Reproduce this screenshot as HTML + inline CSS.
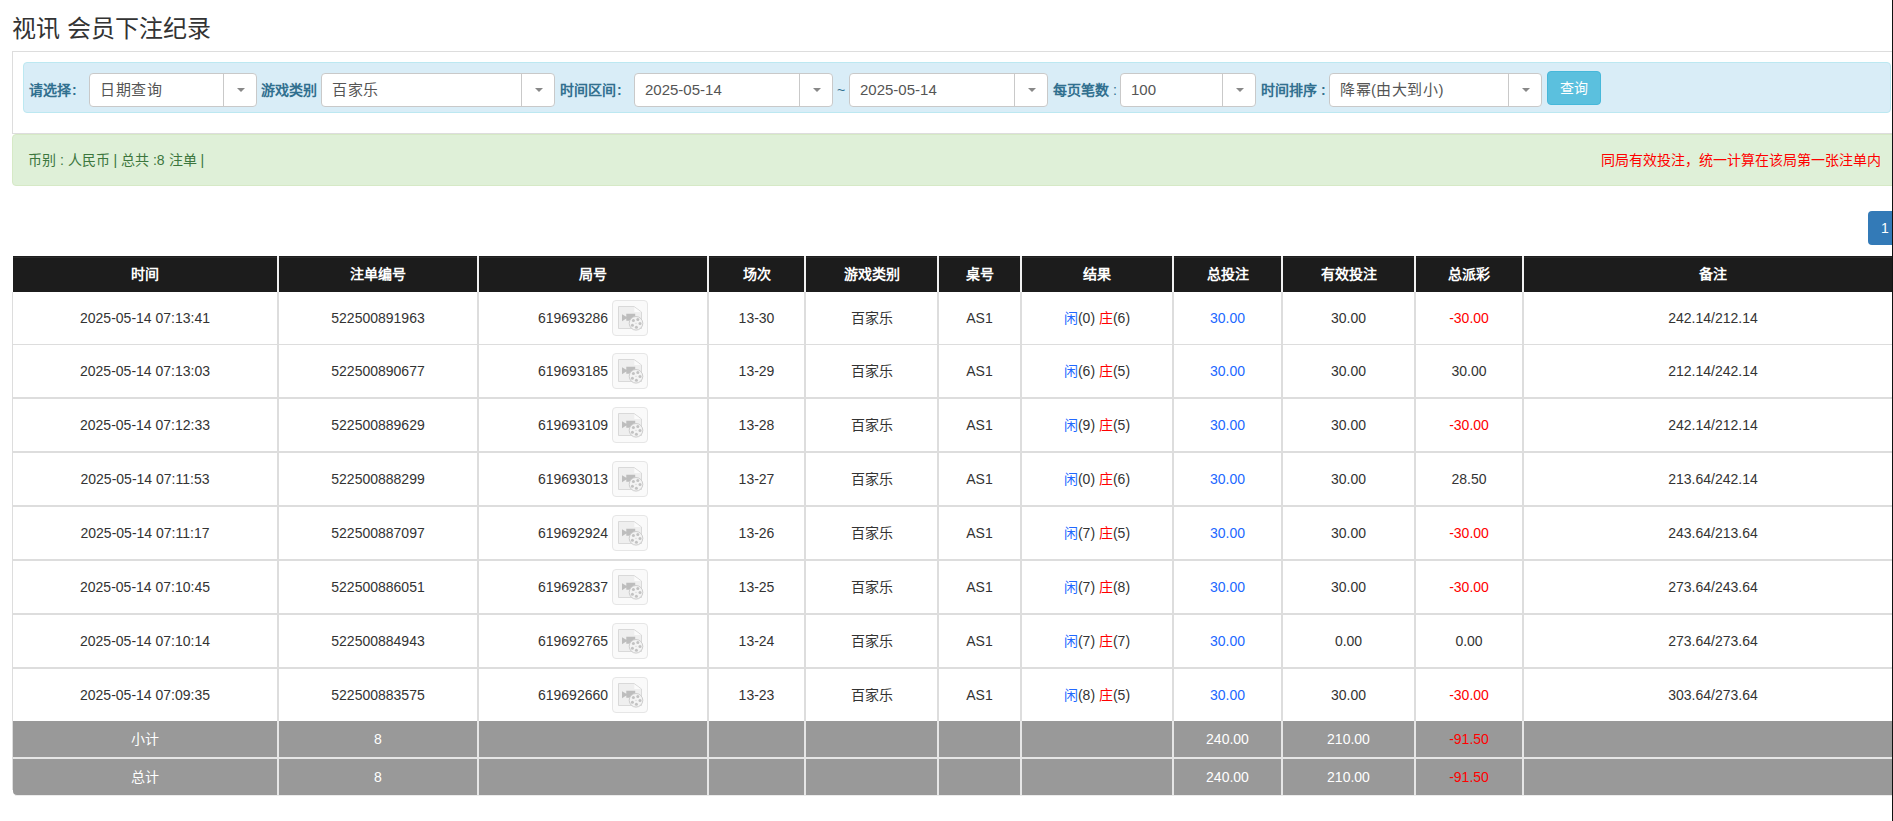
<!DOCTYPE html><html lang="zh-CN"><head><meta charset="utf-8"><title>视讯 会员下注纪录</title><style>
*{box-sizing:border-box;margin:0;padding:0}
html,body{width:1893px;height:821px;overflow:hidden;background:#fff}
body{position:relative;font-family:"Liberation Sans",sans-serif;font-size:14px;color:#333}
.abs{position:absolute}
.title{left:12px;top:12px;font-size:24px;line-height:34px;color:#333;white-space:nowrap}
.panel{left:12px;top:51px;width:1900px;height:83px;border:1px solid #ddd;border-right:none;background:#fff}
.bar{left:23px;top:62px;width:1868px;height:51px;border:1px solid #bce8f1;border-radius:4px;background:#d9edf7}
.lbl{color:#31708f;font-weight:bold;white-space:nowrap;line-height:20px;top:80px}
.sel{top:73px;height:34px;border:1px solid #c9c9c9;border-radius:4px;background:#fff}
.sel .t{position:absolute;left:10px;top:0;line-height:32px;color:#555;white-space:nowrap;font-size:15px}
.sel .d{position:absolute;top:0;bottom:0;border-left:1px solid #c9c9c9}
.sel .ar{position:absolute;top:14px;width:0;height:0;border-left:4px solid transparent;border-right:4px solid transparent;border-top:4px solid #888}
.btn{left:1547px;top:71px;width:54px;height:34px;border:1px solid #46b8da;border-radius:4px;background:#5bc0de;color:#fff;text-align:center;line-height:32px}
.alert{left:12px;top:134px;width:1900px;height:52px;border:1px solid #d6e9c6;border-radius:4px;background:#dff0d8}
.gtxt{left:28px;top:150px;line-height:20px;color:#3c763d;white-space:nowrap}
.rtxt{left:1601px;top:150px;line-height:20px;color:#f00;white-space:nowrap}
.pg{left:1868px;top:211px;width:40px;height:34px;background:#337ab7;border-radius:4px 0 0 4px;color:#fff;line-height:34px;padding-left:13px}
.vl{width:2px}
.hl{height:2px}
.c{position:absolute;text-align:center;white-space:nowrap}
.th{color:#fff;font-weight:bold;line-height:36px;top:256px;height:36px}
.p{margin:0 1px}
.blue{color:#2268ff}
.red{color:#f00}
.ico{display:inline-block;vertical-align:middle;width:36px;height:36px;border:1px solid #e6e6e6;border-radius:4px;background:#fafafa;margin-left:4px;position:relative;top:-1px}
.ico svg{position:absolute;left:-1px;top:-1px}
.edge{left:1892px;top:0;width:1px;height:821px;background:#111}
</style></head><body>
<div class="abs title">视讯 会员下注纪录</div>
<div class="abs panel"></div>
<div class="abs bar"></div>
<div class="abs lbl" style="left:29px">请选择<span style="margin-left:1px">:</span></div>
<div class="abs sel" style="left:89px;width:168px"><span class="t"><span style="letter-spacing:.5px">日期查询</span></span><span class="d" style="left:133px"></span><span class="ar" style="left:147px"></span></div>
<div class="abs lbl" style="left:261px">游戏类别</div>
<div class="abs sel" style="left:321px;width:234px"><span class="t"><span style="letter-spacing:.5px">百家乐</span></span><span class="d" style="left:199px"></span><span class="ar" style="left:213px"></span></div>
<div class="abs lbl" style="left:560px">时间区间<span style="margin-left:1px">:</span></div>
<div class="abs sel" style="left:634px;width:199px"><span class="t">2025-05-14</span><span class="d" style="left:164px"></span><span class="ar" style="left:178px"></span></div>
<div class="abs" style="left:837px;top:80px;line-height:20px;color:#31708f">~</div>
<div class="abs sel" style="left:849px;width:199px"><span class="t">2025-05-14</span><span class="d" style="left:164px"></span><span class="ar" style="left:178px"></span></div>
<div class="abs lbl" style="left:1053px">每页笔数 <span style="font-weight:normal">:</span></div>
<div class="abs sel" style="left:1120px;width:136px"><span class="t">100</span><span class="d" style="left:101px"></span><span class="ar" style="left:115px"></span></div>
<div class="abs lbl" style="left:1261px">时间排序 :</div>
<div class="abs sel" style="left:1329px;width:213px"><span class="t"><span style="letter-spacing:.5px">降幂(由大到小)</span></span><span class="d" style="left:178px"></span><span class="ar" style="left:192px"></span></div>
<div class="abs btn">查询</div>
<div class="abs alert"></div>
<div class="abs gtxt">币别 : 人民币 | 总共 :8 注单 |</div>
<div class="abs rtxt">同局有效投注，统一计算在该局第一张注单内</div>
<div class="abs pg">1</div>
<div class="abs" style="left:13px;top:256px;width:1880px;height:36px;background:linear-gradient(#1e1e1e 0,#1e1e1e 1px,#2a2a2a 1px,#2a2a2a 2px,#1c1c1c 2px)"></div>
<div class="abs" style="left:12px;top:344px;width:1881px;height:1px;background:#ddd"></div>
<div class="abs hl" style="left:12px;top:397px;width:1881px;background:#ddd"></div>
<div class="abs hl" style="left:12px;top:451px;width:1881px;background:#ddd"></div>
<div class="abs hl" style="left:12px;top:505px;width:1881px;background:#ddd"></div>
<div class="abs hl" style="left:12px;top:559px;width:1881px;background:#ddd"></div>
<div class="abs hl" style="left:12px;top:613px;width:1881px;background:#ddd"></div>
<div class="abs hl" style="left:12px;top:667px;width:1881px;background:#ddd"></div>
<div class="abs" style="left:13px;top:721px;width:1880px;height:36px;background:#999"></div>
<div class="abs" style="left:12px;top:757px;width:1881px;height:2px;background:#e6e6e6"></div>
<div class="abs" style="left:13px;top:759px;width:1880px;height:36px;background:#999;border-bottom-left-radius:4px"></div>
<div class="abs" style="left:12px;top:292px;width:1px;height:498px;background:#ddd"></div>
<div class="abs" style="left:15px;top:795px;width:1878px;height:1px;background:#ececec"></div>
<div class="abs vl" style="left:277px;top:256px;height:36px;background:#f0f0f0"></div>
<div class="abs vl" style="left:277px;top:292px;height:429px;background:#ddd"></div>
<div class="abs vl" style="left:277px;top:721px;height:74px;background:#e6e6e6"></div>
<div class="abs vl" style="left:477px;top:256px;height:36px;background:#f0f0f0"></div>
<div class="abs vl" style="left:477px;top:292px;height:429px;background:#ddd"></div>
<div class="abs vl" style="left:477px;top:721px;height:74px;background:#e6e6e6"></div>
<div class="abs vl" style="left:707px;top:256px;height:36px;background:#f0f0f0"></div>
<div class="abs vl" style="left:707px;top:292px;height:429px;background:#ddd"></div>
<div class="abs vl" style="left:707px;top:721px;height:74px;background:#e6e6e6"></div>
<div class="abs vl" style="left:804px;top:256px;height:36px;background:#f0f0f0"></div>
<div class="abs vl" style="left:804px;top:292px;height:429px;background:#ddd"></div>
<div class="abs vl" style="left:804px;top:721px;height:74px;background:#e6e6e6"></div>
<div class="abs vl" style="left:937px;top:256px;height:36px;background:#f0f0f0"></div>
<div class="abs vl" style="left:937px;top:292px;height:429px;background:#ddd"></div>
<div class="abs vl" style="left:937px;top:721px;height:74px;background:#e6e6e6"></div>
<div class="abs vl" style="left:1020px;top:256px;height:36px;background:#f0f0f0"></div>
<div class="abs vl" style="left:1020px;top:292px;height:429px;background:#ddd"></div>
<div class="abs vl" style="left:1020px;top:721px;height:74px;background:#e6e6e6"></div>
<div class="abs vl" style="left:1172px;top:256px;height:36px;background:#f0f0f0"></div>
<div class="abs vl" style="left:1172px;top:292px;height:429px;background:#ddd"></div>
<div class="abs vl" style="left:1172px;top:721px;height:74px;background:#e6e6e6"></div>
<div class="abs vl" style="left:1281px;top:256px;height:36px;background:#f0f0f0"></div>
<div class="abs vl" style="left:1281px;top:292px;height:429px;background:#ddd"></div>
<div class="abs vl" style="left:1281px;top:721px;height:74px;background:#e6e6e6"></div>
<div class="abs vl" style="left:1414px;top:256px;height:36px;background:#f0f0f0"></div>
<div class="abs vl" style="left:1414px;top:292px;height:429px;background:#ddd"></div>
<div class="abs vl" style="left:1414px;top:721px;height:74px;background:#e6e6e6"></div>
<div class="abs vl" style="left:1522px;top:256px;height:36px;background:#f0f0f0"></div>
<div class="abs vl" style="left:1522px;top:292px;height:429px;background:#ddd"></div>
<div class="abs vl" style="left:1522px;top:721px;height:74px;background:#e6e6e6"></div>
<div class="c th" style="left:13px;width:264px">时间</div>
<div class="c th" style="left:279px;width:198px">注单编号</div>
<div class="c th" style="left:479px;width:228px">局号</div>
<div class="c th" style="left:709px;width:95px">场次</div>
<div class="c th" style="left:806px;width:131px">游戏类别</div>
<div class="c th" style="left:939px;width:81px">桌号</div>
<div class="c th" style="left:1022px;width:150px">结果</div>
<div class="c th" style="left:1174px;width:107px">总投注</div>
<div class="c th" style="left:1283px;width:131px">有效投注</div>
<div class="c th" style="left:1416px;width:106px">总派彩</div>
<div class="c th" style="left:1524px;width:378px">备注</div>
<div class="c" style="left:13px;width:264px;top:292px;height:52px;line-height:52px">2025-05-14 07:13:41</div>
<div class="c" style="left:279px;width:198px;top:292px;height:52px;line-height:52px">522500891963</div>
<div class="c" style="left:479px;width:228px;top:292px;height:52px;line-height:52px">619693286<span class="ico"><svg width="36" height="36" viewBox="0 0 36 36"><path d="M6.5 6.5H22L29.5 12V28.5H6.5Z" fill="#efefef" stroke="#d9d9d9" stroke-width="1"/><path d="M22.3 7.2L28.8 12H22.3Z" fill="#fbfbfb"/><path d="M10 14.3L14.3 16.8V13.8H23.2V20.8H14.3V18.5L10 21.2Z" fill="#bdbdbd"/><circle cx="24" cy="23.3" r="6.8" fill="#f3f3f3" stroke="#cdcdcd" stroke-width="1"/><g fill="#c2c2c2"><circle cx="21.4" cy="20.6" r="1.5"/><circle cx="25.8" cy="19.5" r="1.5"/><circle cx="28" cy="23.6" r="1.5"/><circle cx="24.4" cy="27.3" r="1.5"/><circle cx="20.4" cy="25.2" r="1.5"/><circle cx="24" cy="23.3" r=".5"/></g></svg></span></div>
<div class="c" style="left:709px;width:95px;top:292px;height:52px;line-height:52px">13-30</div>
<div class="c" style="left:806px;width:131px;top:292px;height:52px;line-height:52px">百家乐</div>
<div class="c" style="left:939px;width:81px;top:292px;height:52px;line-height:52px">AS1</div>
<div class="c" style="left:1022px;width:150px;top:292px;height:52px;line-height:52px"><span class="blue">闲</span>(0) <span class="red">庄</span>(6)</div>
<div class="c" style="left:1174px;width:107px;top:292px;height:52px;line-height:52px"><span class="blue">30.00</span></div>
<div class="c" style="left:1283px;width:131px;top:292px;height:52px;line-height:52px">30.00</div>
<div class="c" style="left:1416px;width:106px;top:292px;height:52px;line-height:52px"><span class="red">-30.00</span></div>
<div class="c" style="left:1524px;width:378px;top:292px;height:52px;line-height:52px">242.14/212.14</div>
<div class="c" style="left:13px;width:264px;top:345px;height:52px;line-height:52px">2025-05-14 07:13:03</div>
<div class="c" style="left:279px;width:198px;top:345px;height:52px;line-height:52px">522500890677</div>
<div class="c" style="left:479px;width:228px;top:345px;height:52px;line-height:52px">619693185<span class="ico"><svg width="36" height="36" viewBox="0 0 36 36"><path d="M6.5 6.5H22L29.5 12V28.5H6.5Z" fill="#efefef" stroke="#d9d9d9" stroke-width="1"/><path d="M22.3 7.2L28.8 12H22.3Z" fill="#fbfbfb"/><path d="M10 14.3L14.3 16.8V13.8H23.2V20.8H14.3V18.5L10 21.2Z" fill="#bdbdbd"/><circle cx="24" cy="23.3" r="6.8" fill="#f3f3f3" stroke="#cdcdcd" stroke-width="1"/><g fill="#c2c2c2"><circle cx="21.4" cy="20.6" r="1.5"/><circle cx="25.8" cy="19.5" r="1.5"/><circle cx="28" cy="23.6" r="1.5"/><circle cx="24.4" cy="27.3" r="1.5"/><circle cx="20.4" cy="25.2" r="1.5"/><circle cx="24" cy="23.3" r=".5"/></g></svg></span></div>
<div class="c" style="left:709px;width:95px;top:345px;height:52px;line-height:52px">13-29</div>
<div class="c" style="left:806px;width:131px;top:345px;height:52px;line-height:52px">百家乐</div>
<div class="c" style="left:939px;width:81px;top:345px;height:52px;line-height:52px">AS1</div>
<div class="c" style="left:1022px;width:150px;top:345px;height:52px;line-height:52px"><span class="blue">闲</span>(6) <span class="red">庄</span>(5)</div>
<div class="c" style="left:1174px;width:107px;top:345px;height:52px;line-height:52px"><span class="blue">30.00</span></div>
<div class="c" style="left:1283px;width:131px;top:345px;height:52px;line-height:52px">30.00</div>
<div class="c" style="left:1416px;width:106px;top:345px;height:52px;line-height:52px">30.00</div>
<div class="c" style="left:1524px;width:378px;top:345px;height:52px;line-height:52px">212.14/242.14</div>
<div class="c" style="left:13px;width:264px;top:399px;height:52px;line-height:52px">2025-05-14 07:12:33</div>
<div class="c" style="left:279px;width:198px;top:399px;height:52px;line-height:52px">522500889629</div>
<div class="c" style="left:479px;width:228px;top:399px;height:52px;line-height:52px">619693109<span class="ico"><svg width="36" height="36" viewBox="0 0 36 36"><path d="M6.5 6.5H22L29.5 12V28.5H6.5Z" fill="#efefef" stroke="#d9d9d9" stroke-width="1"/><path d="M22.3 7.2L28.8 12H22.3Z" fill="#fbfbfb"/><path d="M10 14.3L14.3 16.8V13.8H23.2V20.8H14.3V18.5L10 21.2Z" fill="#bdbdbd"/><circle cx="24" cy="23.3" r="6.8" fill="#f3f3f3" stroke="#cdcdcd" stroke-width="1"/><g fill="#c2c2c2"><circle cx="21.4" cy="20.6" r="1.5"/><circle cx="25.8" cy="19.5" r="1.5"/><circle cx="28" cy="23.6" r="1.5"/><circle cx="24.4" cy="27.3" r="1.5"/><circle cx="20.4" cy="25.2" r="1.5"/><circle cx="24" cy="23.3" r=".5"/></g></svg></span></div>
<div class="c" style="left:709px;width:95px;top:399px;height:52px;line-height:52px">13-28</div>
<div class="c" style="left:806px;width:131px;top:399px;height:52px;line-height:52px">百家乐</div>
<div class="c" style="left:939px;width:81px;top:399px;height:52px;line-height:52px">AS1</div>
<div class="c" style="left:1022px;width:150px;top:399px;height:52px;line-height:52px"><span class="blue">闲</span>(9) <span class="red">庄</span>(5)</div>
<div class="c" style="left:1174px;width:107px;top:399px;height:52px;line-height:52px"><span class="blue">30.00</span></div>
<div class="c" style="left:1283px;width:131px;top:399px;height:52px;line-height:52px">30.00</div>
<div class="c" style="left:1416px;width:106px;top:399px;height:52px;line-height:52px"><span class="red">-30.00</span></div>
<div class="c" style="left:1524px;width:378px;top:399px;height:52px;line-height:52px">242.14/212.14</div>
<div class="c" style="left:13px;width:264px;top:453px;height:52px;line-height:52px">2025-05-14 07:11:53</div>
<div class="c" style="left:279px;width:198px;top:453px;height:52px;line-height:52px">522500888299</div>
<div class="c" style="left:479px;width:228px;top:453px;height:52px;line-height:52px">619693013<span class="ico"><svg width="36" height="36" viewBox="0 0 36 36"><path d="M6.5 6.5H22L29.5 12V28.5H6.5Z" fill="#efefef" stroke="#d9d9d9" stroke-width="1"/><path d="M22.3 7.2L28.8 12H22.3Z" fill="#fbfbfb"/><path d="M10 14.3L14.3 16.8V13.8H23.2V20.8H14.3V18.5L10 21.2Z" fill="#bdbdbd"/><circle cx="24" cy="23.3" r="6.8" fill="#f3f3f3" stroke="#cdcdcd" stroke-width="1"/><g fill="#c2c2c2"><circle cx="21.4" cy="20.6" r="1.5"/><circle cx="25.8" cy="19.5" r="1.5"/><circle cx="28" cy="23.6" r="1.5"/><circle cx="24.4" cy="27.3" r="1.5"/><circle cx="20.4" cy="25.2" r="1.5"/><circle cx="24" cy="23.3" r=".5"/></g></svg></span></div>
<div class="c" style="left:709px;width:95px;top:453px;height:52px;line-height:52px">13-27</div>
<div class="c" style="left:806px;width:131px;top:453px;height:52px;line-height:52px">百家乐</div>
<div class="c" style="left:939px;width:81px;top:453px;height:52px;line-height:52px">AS1</div>
<div class="c" style="left:1022px;width:150px;top:453px;height:52px;line-height:52px"><span class="blue">闲</span>(0) <span class="red">庄</span>(6)</div>
<div class="c" style="left:1174px;width:107px;top:453px;height:52px;line-height:52px"><span class="blue">30.00</span></div>
<div class="c" style="left:1283px;width:131px;top:453px;height:52px;line-height:52px">30.00</div>
<div class="c" style="left:1416px;width:106px;top:453px;height:52px;line-height:52px">28.50</div>
<div class="c" style="left:1524px;width:378px;top:453px;height:52px;line-height:52px">213.64/242.14</div>
<div class="c" style="left:13px;width:264px;top:507px;height:52px;line-height:52px">2025-05-14 07:11:17</div>
<div class="c" style="left:279px;width:198px;top:507px;height:52px;line-height:52px">522500887097</div>
<div class="c" style="left:479px;width:228px;top:507px;height:52px;line-height:52px">619692924<span class="ico"><svg width="36" height="36" viewBox="0 0 36 36"><path d="M6.5 6.5H22L29.5 12V28.5H6.5Z" fill="#efefef" stroke="#d9d9d9" stroke-width="1"/><path d="M22.3 7.2L28.8 12H22.3Z" fill="#fbfbfb"/><path d="M10 14.3L14.3 16.8V13.8H23.2V20.8H14.3V18.5L10 21.2Z" fill="#bdbdbd"/><circle cx="24" cy="23.3" r="6.8" fill="#f3f3f3" stroke="#cdcdcd" stroke-width="1"/><g fill="#c2c2c2"><circle cx="21.4" cy="20.6" r="1.5"/><circle cx="25.8" cy="19.5" r="1.5"/><circle cx="28" cy="23.6" r="1.5"/><circle cx="24.4" cy="27.3" r="1.5"/><circle cx="20.4" cy="25.2" r="1.5"/><circle cx="24" cy="23.3" r=".5"/></g></svg></span></div>
<div class="c" style="left:709px;width:95px;top:507px;height:52px;line-height:52px">13-26</div>
<div class="c" style="left:806px;width:131px;top:507px;height:52px;line-height:52px">百家乐</div>
<div class="c" style="left:939px;width:81px;top:507px;height:52px;line-height:52px">AS1</div>
<div class="c" style="left:1022px;width:150px;top:507px;height:52px;line-height:52px"><span class="blue">闲</span>(7) <span class="red">庄</span>(5)</div>
<div class="c" style="left:1174px;width:107px;top:507px;height:52px;line-height:52px"><span class="blue">30.00</span></div>
<div class="c" style="left:1283px;width:131px;top:507px;height:52px;line-height:52px">30.00</div>
<div class="c" style="left:1416px;width:106px;top:507px;height:52px;line-height:52px"><span class="red">-30.00</span></div>
<div class="c" style="left:1524px;width:378px;top:507px;height:52px;line-height:52px">243.64/213.64</div>
<div class="c" style="left:13px;width:264px;top:561px;height:52px;line-height:52px">2025-05-14 07:10:45</div>
<div class="c" style="left:279px;width:198px;top:561px;height:52px;line-height:52px">522500886051</div>
<div class="c" style="left:479px;width:228px;top:561px;height:52px;line-height:52px">619692837<span class="ico"><svg width="36" height="36" viewBox="0 0 36 36"><path d="M6.5 6.5H22L29.5 12V28.5H6.5Z" fill="#efefef" stroke="#d9d9d9" stroke-width="1"/><path d="M22.3 7.2L28.8 12H22.3Z" fill="#fbfbfb"/><path d="M10 14.3L14.3 16.8V13.8H23.2V20.8H14.3V18.5L10 21.2Z" fill="#bdbdbd"/><circle cx="24" cy="23.3" r="6.8" fill="#f3f3f3" stroke="#cdcdcd" stroke-width="1"/><g fill="#c2c2c2"><circle cx="21.4" cy="20.6" r="1.5"/><circle cx="25.8" cy="19.5" r="1.5"/><circle cx="28" cy="23.6" r="1.5"/><circle cx="24.4" cy="27.3" r="1.5"/><circle cx="20.4" cy="25.2" r="1.5"/><circle cx="24" cy="23.3" r=".5"/></g></svg></span></div>
<div class="c" style="left:709px;width:95px;top:561px;height:52px;line-height:52px">13-25</div>
<div class="c" style="left:806px;width:131px;top:561px;height:52px;line-height:52px">百家乐</div>
<div class="c" style="left:939px;width:81px;top:561px;height:52px;line-height:52px">AS1</div>
<div class="c" style="left:1022px;width:150px;top:561px;height:52px;line-height:52px"><span class="blue">闲</span>(7) <span class="red">庄</span>(8)</div>
<div class="c" style="left:1174px;width:107px;top:561px;height:52px;line-height:52px"><span class="blue">30.00</span></div>
<div class="c" style="left:1283px;width:131px;top:561px;height:52px;line-height:52px">30.00</div>
<div class="c" style="left:1416px;width:106px;top:561px;height:52px;line-height:52px"><span class="red">-30.00</span></div>
<div class="c" style="left:1524px;width:378px;top:561px;height:52px;line-height:52px">273.64/243.64</div>
<div class="c" style="left:13px;width:264px;top:615px;height:52px;line-height:52px">2025-05-14 07:10:14</div>
<div class="c" style="left:279px;width:198px;top:615px;height:52px;line-height:52px">522500884943</div>
<div class="c" style="left:479px;width:228px;top:615px;height:52px;line-height:52px">619692765<span class="ico"><svg width="36" height="36" viewBox="0 0 36 36"><path d="M6.5 6.5H22L29.5 12V28.5H6.5Z" fill="#efefef" stroke="#d9d9d9" stroke-width="1"/><path d="M22.3 7.2L28.8 12H22.3Z" fill="#fbfbfb"/><path d="M10 14.3L14.3 16.8V13.8H23.2V20.8H14.3V18.5L10 21.2Z" fill="#bdbdbd"/><circle cx="24" cy="23.3" r="6.8" fill="#f3f3f3" stroke="#cdcdcd" stroke-width="1"/><g fill="#c2c2c2"><circle cx="21.4" cy="20.6" r="1.5"/><circle cx="25.8" cy="19.5" r="1.5"/><circle cx="28" cy="23.6" r="1.5"/><circle cx="24.4" cy="27.3" r="1.5"/><circle cx="20.4" cy="25.2" r="1.5"/><circle cx="24" cy="23.3" r=".5"/></g></svg></span></div>
<div class="c" style="left:709px;width:95px;top:615px;height:52px;line-height:52px">13-24</div>
<div class="c" style="left:806px;width:131px;top:615px;height:52px;line-height:52px">百家乐</div>
<div class="c" style="left:939px;width:81px;top:615px;height:52px;line-height:52px">AS1</div>
<div class="c" style="left:1022px;width:150px;top:615px;height:52px;line-height:52px"><span class="blue">闲</span>(7) <span class="red">庄</span>(7)</div>
<div class="c" style="left:1174px;width:107px;top:615px;height:52px;line-height:52px"><span class="blue">30.00</span></div>
<div class="c" style="left:1283px;width:131px;top:615px;height:52px;line-height:52px">0.00</div>
<div class="c" style="left:1416px;width:106px;top:615px;height:52px;line-height:52px">0.00</div>
<div class="c" style="left:1524px;width:378px;top:615px;height:52px;line-height:52px">273.64/273.64</div>
<div class="c" style="left:13px;width:264px;top:669px;height:52px;line-height:52px">2025-05-14 07:09:35</div>
<div class="c" style="left:279px;width:198px;top:669px;height:52px;line-height:52px">522500883575</div>
<div class="c" style="left:479px;width:228px;top:669px;height:52px;line-height:52px">619692660<span class="ico"><svg width="36" height="36" viewBox="0 0 36 36"><path d="M6.5 6.5H22L29.5 12V28.5H6.5Z" fill="#efefef" stroke="#d9d9d9" stroke-width="1"/><path d="M22.3 7.2L28.8 12H22.3Z" fill="#fbfbfb"/><path d="M10 14.3L14.3 16.8V13.8H23.2V20.8H14.3V18.5L10 21.2Z" fill="#bdbdbd"/><circle cx="24" cy="23.3" r="6.8" fill="#f3f3f3" stroke="#cdcdcd" stroke-width="1"/><g fill="#c2c2c2"><circle cx="21.4" cy="20.6" r="1.5"/><circle cx="25.8" cy="19.5" r="1.5"/><circle cx="28" cy="23.6" r="1.5"/><circle cx="24.4" cy="27.3" r="1.5"/><circle cx="20.4" cy="25.2" r="1.5"/><circle cx="24" cy="23.3" r=".5"/></g></svg></span></div>
<div class="c" style="left:709px;width:95px;top:669px;height:52px;line-height:52px">13-23</div>
<div class="c" style="left:806px;width:131px;top:669px;height:52px;line-height:52px">百家乐</div>
<div class="c" style="left:939px;width:81px;top:669px;height:52px;line-height:52px">AS1</div>
<div class="c" style="left:1022px;width:150px;top:669px;height:52px;line-height:52px"><span class="blue">闲</span>(8) <span class="red">庄</span>(5)</div>
<div class="c" style="left:1174px;width:107px;top:669px;height:52px;line-height:52px"><span class="blue">30.00</span></div>
<div class="c" style="left:1283px;width:131px;top:669px;height:52px;line-height:52px">30.00</div>
<div class="c" style="left:1416px;width:106px;top:669px;height:52px;line-height:52px"><span class="red">-30.00</span></div>
<div class="c" style="left:1524px;width:378px;top:669px;height:52px;line-height:52px">303.64/273.64</div>
<div class="c" style="left:13px;width:264px;top:721px;height:36px;line-height:36px;color:#fff">小计</div>
<div class="c" style="left:279px;width:198px;top:721px;height:36px;line-height:36px;color:#fff">8</div>
<div class="c" style="left:1174px;width:107px;top:721px;height:36px;line-height:36px;color:#fff">240.00</div>
<div class="c" style="left:1283px;width:131px;top:721px;height:36px;line-height:36px;color:#fff">210.00</div>
<div class="c" style="left:1416px;width:106px;top:721px;height:36px;line-height:36px;color:#fff"><span class="red">-91.50</span></div>
<div class="c" style="left:13px;width:264px;top:759px;height:36px;line-height:36px;color:#fff">总计</div>
<div class="c" style="left:279px;width:198px;top:759px;height:36px;line-height:36px;color:#fff">8</div>
<div class="c" style="left:1174px;width:107px;top:759px;height:36px;line-height:36px;color:#fff">240.00</div>
<div class="c" style="left:1283px;width:131px;top:759px;height:36px;line-height:36px;color:#fff">210.00</div>
<div class="c" style="left:1416px;width:106px;top:759px;height:36px;line-height:36px;color:#fff"><span class="red">-91.50</span></div>
<div class="abs edge"></div>
</body></html>
